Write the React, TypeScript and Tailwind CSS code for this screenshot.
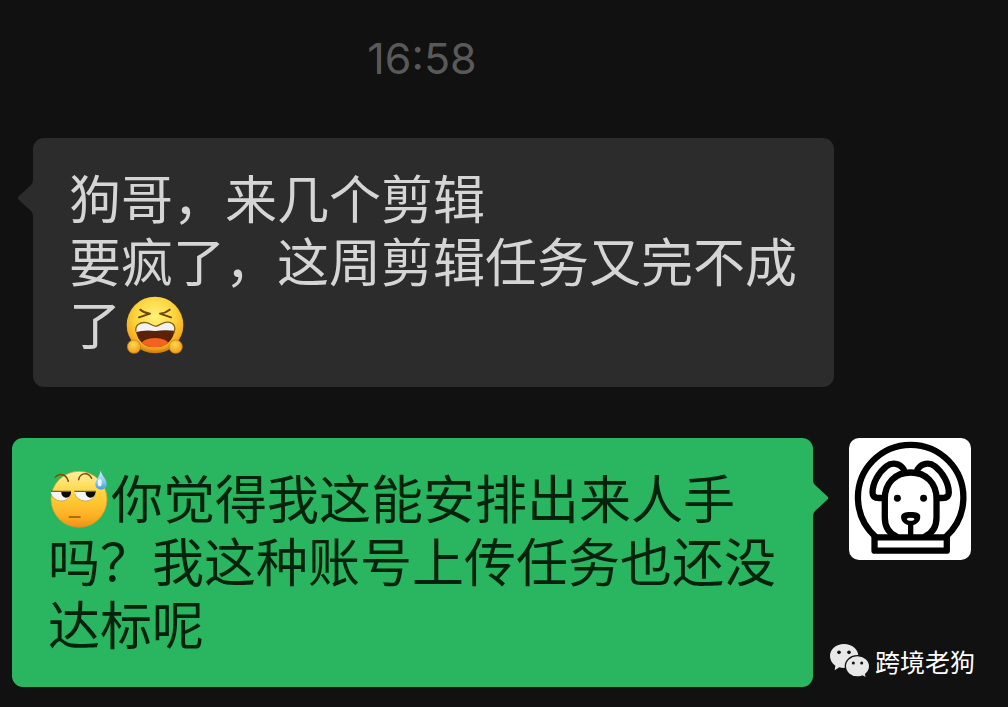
import type { ReactNode } from "react";

function LaughingFace() {
  return (
    <svg viewBox="47 33 174 174" role="img" aria-label="大笑" className="-mt-4 -mb-1 mr-1 ml-[5px] inline-block size-[58px] align-middle">
      <defs>
        <radialGradient id="laughFace" cx="0.5" cy="0.35" r="0.65">
          <stop offset="0" stopColor="#fff27a" />
          <stop offset="0.55" stopColor="#fdd43c" />
          <stop offset="0.85" stopColor="#f6ab1e" />
          <stop offset="1" stopColor="#c9760c" />
        </radialGradient>
        <radialGradient id="laughHand" cx="0.45" cy="0.35" r="0.7">
          <stop offset="0" stopColor="#ffd84f" />
          <stop offset="1" stopColor="#ee9716" />
        </radialGradient>
        <clipPath id="laughMouth">
          <path d="M77 140 C73 122 88 110 108 113 C124 116 127 126 140 123 C153 119 160 108 178 112 C193 116 197 128 191 145 C185 168 166 187 134 187 C102 187 83 168 77 140 Z" />
        </clipPath>
      </defs>
      <circle cx="134" cy="120" r="85" fill="url(#laughFace)" />
      <g fill="none" stroke="#6b4305" strokeWidth="6" strokeLinecap="round" strokeLinejoin="round">
        <path d="M90 74 Q101 84 119 86 Q101 92 86 97" />
        <path d="M178 74 Q166 84 149 86 Q167 92 182 97" />
      </g>
      <g clipPath="url(#laughMouth)">
        <rect x="70" y="105" width="130" height="90" fill="#5b2208" />
        <path d="M70 105 H200 V138 Q165 134 134 138 Q100 134 70 143 Z" fill="#f1f1f5" />
        <ellipse cx="134" cy="177" rx="40" ry="18" fill="#f2641d" />
      </g>
      <path d="M77 140 C73 122 88 110 108 113 C124 116 127 126 140 123 C153 119 160 108 178 112 C193 116 197 128 191 145" fill="none" stroke="#8c6410" strokeWidth="4" />
      <circle cx="71" cy="185" r="20" fill="url(#laughHand)" stroke="#c87d12" strokeWidth="2" />
      <circle cx="196" cy="185" r="20" fill="url(#laughHand)" stroke="#c87d12" strokeWidth="2" />
    </svg>
  );
}

function SweatFace() {
  return (
    <svg viewBox="32 33 174 174" role="img" aria-label="汗" className="-mt-4 -mb-1 mr-[3px] ml-0.5 inline-block size-[58px] align-middle">
      <defs>
        <linearGradient id="sweatFace" x1="0" y1="0" x2="0" y2="1">
          <stop offset="0" stopColor="#fff0a0" />
          <stop offset="0.4" stopColor="#ffd43a" />
          <stop offset="0.8" stopColor="#fdb024" />
          <stop offset="1" stopColor="#ee9018" />
        </linearGradient>
        <linearGradient id="sweatDrop" x1="0" y1="0" x2="0" y2="1">
          <stop offset="0" stopColor="#d8f0fc" />
          <stop offset="0.6" stopColor="#86c8ef" />
          <stop offset="1" stopColor="#4a9bdc" />
        </linearGradient>
      </defs>
      <circle cx="119" cy="121" r="84" fill="url(#sweatFace)" stroke="#dd9a20" strokeWidth="2" />
      <g fill="none" stroke="#7d4a0c" strokeWidth="4.5" strokeLinecap="round">
        <path d="M48 54 C60 43 80 43 87 67" />
        <path d="M118 62 C122 41 146 38 157 58" />
      </g>
      <path d="M34 97 H95 C96 116 83 127 66 126 C48 125 37 116 34 97 Z" fill="#f5f5f5" />
      <path d="M66 97 H95 C96 109 89 116 80 116 C71 115 65 109 66 97 Z" fill="#0d0a08" />
      <path d="M105 97 H170 C170 116 156 127 138 126 C119 125 107 116 105 97 Z" fill="#f5f5f5" />
      <path d="M139 97 H169 C169 109 162 116 153 116 C144 115 138 109 139 97 Z" fill="#0d0a08" />
      <path d="M34 97 H95 M105 97 H170" stroke="#70604a" strokeWidth="4" />
      <path d="M36 105 C45 132 84 133 94 107 M107 105 C116 132 158 133 168 107" fill="none" stroke="#bf8a2c" strokeWidth="2" />
      <path d="M90 174 H122" stroke="#94580e" strokeWidth="5" strokeLinecap="round" />
      <path d="M184 35 C188 52 203 60 202 77 C201 96 169 96 168 77 C168 62 181 53 184 35 Z" fill="url(#sweatDrop)" />
      <ellipse cx="181" cy="71" rx="6" ry="11" fill="#e9f7ff" />
    </svg>
  );
}

function DogAvatar() {
  return (
    <svg viewBox="27 25 368 368" role="img" aria-label="跨境老狗" className="size-[122px] shrink-0 rounded-[10px] bg-white">
      <g fill="none" stroke="#000" strokeWidth="19" strokeLinecap="round" strokeLinejoin="round">
        <path d="M107 323 A159 159 0 1 1 319 323" />
        <rect x="104" y="325" width="218" height="40" />
        <path d="M168 321 C145 310 135 290 135 265 V208 C135 162 166 129 213 129 C260 129 291 162 291 208 V265 C291 290 281 310 258 321" />
        <path d="M192 120 C180 100 156 98 140 110 C117 128 98 160 98 190 C98 202 107 206 118 206 H132" />
        <path d="M234 120 C246 100 270 98 286 110 C309 128 328 160 328 190 C328 202 319 206 308 206 H294" />
        <path d="M213 280 V318" strokeWidth="16" />
      </g>
      <circle cx="173" cy="207" r="10.5" />
      <circle cx="252" cy="207" r="10.5" />
      <path d="M213 248 C231 248 242 251 242 263 C242 278 228 288 213 288 C198 288 184 278 184 263 C184 251 196 248 213 248 Z" />
      <ellipse cx="213" cy="270" rx="11" ry="4.5" fill="#fff" />
    </svg>
  );
}

function WeChatLogo() {
  return (
    <svg viewBox="24 38 126 108" aria-hidden="true" className="h-9 w-[42px]">
      <path d="M69 41 C93 41 112 57 112 77 C112 97 93 113 69 113 C64 113 59 112 55 111 L41 120 L43 106 C33 99 27 89 27 77 C27 57 45 41 69 41 Z" fill="#e8e8e8" />
      <path d="M109 76 C130 76 146 90 146 108 C146 118 141 126 134 132 L136 143 L124 137 C119 139 114 140 109 140 C89 140 73 126 73 108 C73 90 89 76 109 76 Z" fill="#e8e8e8" stroke="#111" strokeWidth="4" />
      <g fill="#111">
        <circle cx="54" cy="66" r="5.5" />
        <circle cx="84" cy="66" r="5.5" />
        <circle cx="97" cy="98" r="4.5" />
        <circle cx="122" cy="98" r="4.5" />
      </g>
    </svg>
  );
}

function Bubble({ side, children }: { side: "left" | "right"; children: ReactNode }) {
  const mine = side === "right";
  return (
    <div
      className={
        mine
          ? "relative max-w-[801px] rounded-[11px] bg-[#2ab561] px-9 pt-[27px] pb-[33px] text-[#04220c]"
          : "relative max-w-[801px] rounded-[11px] bg-[#2c2c2c] px-9 pt-[27px] pb-[33px] text-[#d5d5d5]"
      }
    >
      <svg
        viewBox="0 0 16 36"
        aria-hidden="true"
        className={
          mine
            ? "absolute top-[42px] left-full h-9 w-4 fill-[#2ab561]"
            : "absolute top-[42px] right-full h-9 w-4 -scale-x-100 fill-[#2c2c2c]"
        }
      >
        <path d="M0 0 Q0 3 2 5 L14.500 16.500 Q16 18 14.500 19.500 L2 31 Q0 33 0 36 Z" />
      </svg>
      <p className="text-[52px] leading-[63px]">{children}</p>
    </div>
  );
}

export default function App() {
  return (
    <main
      lang="zh-CN"
      className="relative flex min-h-screen flex-col bg-[#111111] pt-7 pb-5 font-['Noto_Sans_CJK_SC',sans-serif]"
    >
      <time className="block pr-[164px] text-center font-['Inter',sans-serif] text-[43px] leading-[60px] text-[#595959]">
        16:58
      </time>
      <section className="mt-[50px] flex flex-col gap-[51px]">
        <div className="flex items-start pl-[33px]">
          <Bubble side="left">
            狗哥，来几个剪辑
            <br />
            要疯了，这周剪辑任务又完不成了
            <LaughingFace />
          </Bubble>
        </div>
        <div className="flex items-start justify-end gap-9 pr-[37px] pl-3">
          <Bubble side="right">
            <SweatFace />
            你觉得我这能安排出来人手吗？我这种账号上传任务也还没达标呢
          </Bubble>
          <DogAvatar />
        </div>
      </section>
      <footer className="absolute right-[33px] bottom-7 flex items-center gap-1 text-[25px] leading-9 text-white">
        <WeChatLogo />
        <span>跨境老狗</span>
      </footer>
    </main>
  );
}
